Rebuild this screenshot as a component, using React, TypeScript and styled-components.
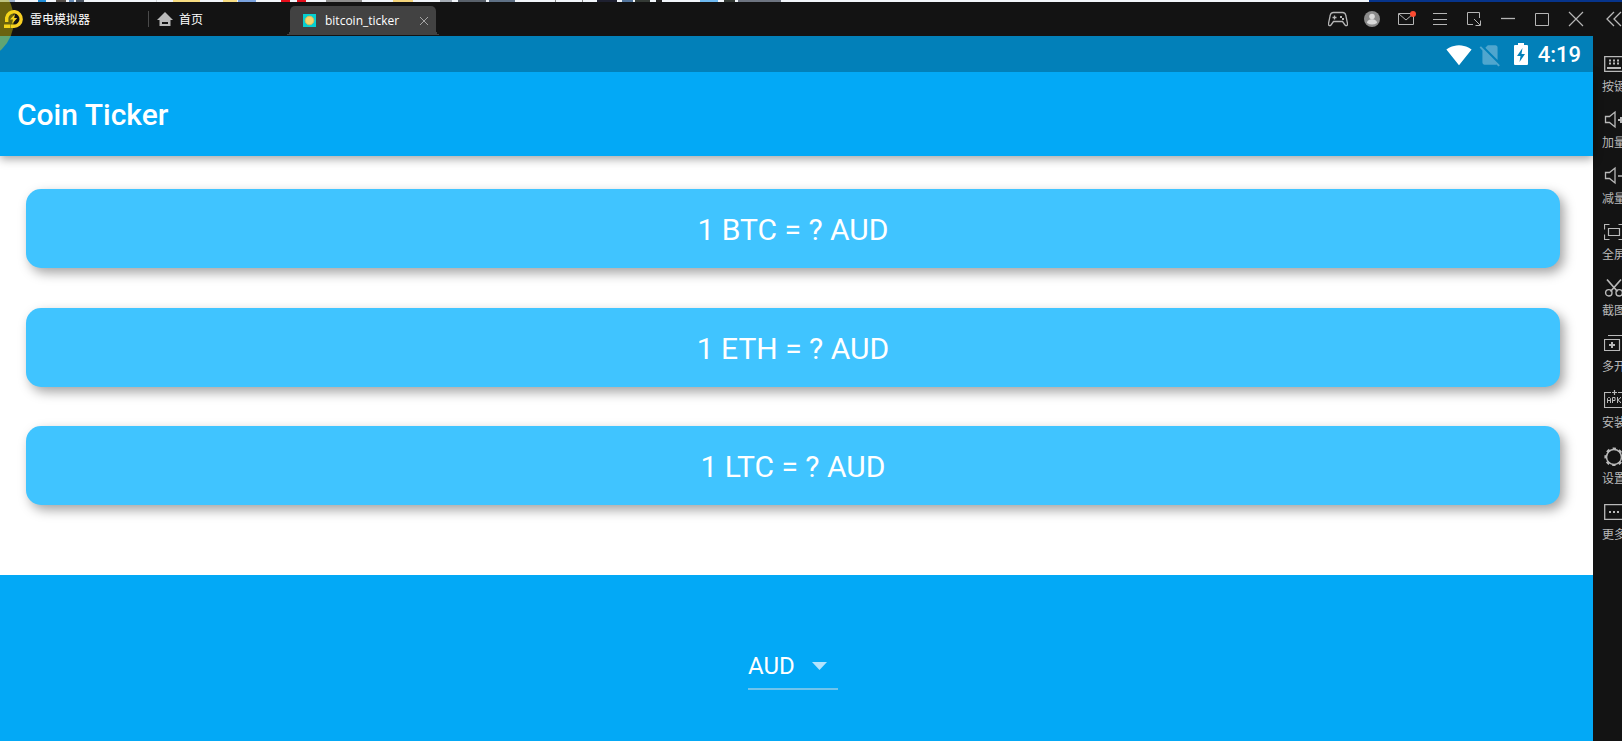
import React from "react";
import styled, { createGlobalStyle } from "styled-components";

const GlobalStyle = createGlobalStyle`
  * { box-sizing: border-box; }
  html, body, #root { height: 100%; }
  body { margin: 0; overflow: hidden; background: #131313; }
  button { font: inherit; color: inherit; background: none; border: 0; padding: 0; cursor: pointer; }
  svg { display: block; }
`;

const uiFont = `"Open Sans", "Noto Sans CJK SC", sans-serif`;
const appFont = `Roboto, sans-serif`;

const Desktop = styled.div`
  display: flex;
  flex-direction: column;
  min-height: 100vh;
  position: relative;
`;

const BackdropStrip = styled.svg`
  width: 100%;
  height: 2px;
  background: linear-gradient(90deg, #f1f5fa 84.4%, #06348c 84.4%);
`;

const Emulator = styled.div`
  display: flex;
  flex: 1;
  background: #131313;
`;

const Main = styled.div`
  flex: 1;
  min-width: 0;
  display: flex;
  flex-direction: column;
`;

const TitleBar = styled.header`
  display: flex;
  align-items: center;
  height: 34px;
  color: #fff;
  font-family: ${uiFont};
  font-size: 12px;
  line-height: 16px;
`;

const Brand = styled.div`
  display: flex;
  align-items: center;
  gap: 6px;
  width: 148px;
`;

const Label = styled.span`
  padding-top: 2px;
`;

const HomeButton = styled.button`
  display: flex;
  align-items: center;
  gap: 6px;
  width: 142px;
  height: 16px;
  padding-left: 8px;
  border-left: 1px solid #4a4a4a;
`;

const Tab = styled.div`
  position: relative;
  align-self: flex-end;
  display: flex;
  align-items: center;
  width: 146px;
  height: 29px;
  margin-bottom: 1px;
  padding: 0 8px 0 13px;
  background: #424242;
  border-radius: 5px 5px 0 0;

  &::before, &::after {
    content: "";
    position: absolute;
    bottom: 0;
    width: 5px;
    height: 5px;
  }
  &::before { right: 100%; background: radial-gradient(circle at 0 0, transparent 5px, #424242 5px); }
  &::after { left: 100%; background: radial-gradient(circle at 100% 0, transparent 5px, #424242 5px); }
`;

const TabName = styled.span`
  flex: 1;
  margin-left: 9px;
  white-space: nowrap;
`;

const WindowTools = styled.div`
  display: flex;
  margin-left: auto;
`;

const ToolButton = styled.button`
  display: grid;
  place-items: center;
  width: 34px;
  height: 34px;
  color: #b5b5b5;
`;

const StatusBar = styled.div`
  position: relative;
  z-index: 1;
  display: flex;
  align-items: center;
  justify-content: flex-end;
  height: 36px;
  padding: 2px 12px 0 0;
  background: #0280b9;
  color: #fff;
  font: 500 22px/34px ${appFont};
`;

const StatusIcons = styled.div`
  display: flex;
  align-items: center;
  gap: 5px;
  margin-right: 4px;
`;

const AppBar = styled.div`
  position: relative;
  display: flex;
  align-items: center;
  height: 84px;
  padding: 2px 17px 0;
  background: #03a9f6;
  color: #fff;
  box-shadow: 0 3px 9px rgba(0, 0, 0, 0.36);
`;

const AppTitle = styled.h1`
  margin: 0;
  font: 500 30px/36px ${appFont};
`;

const RateList = styled.main`
  flex: 1;
  display: flex;
  flex-direction: column;
  justify-content: space-between;
  padding: 33px 33px 70px 26px;
  background: #fff;
`;

const RateCard = styled.div`
  display: grid;
  place-items: center;
  height: 79px;
  padding-top: 3px;
  border-radius: 15px;
  background: #40c4ff;
  color: #fff;
  font: 400 30px/36px ${appFont};
  box-shadow: 4px 5px 12px rgba(0, 0, 0, 0.36);
`;

const CurrencyBar = styled.footer`
  display: flex;
  justify-content: center;
  padding: 67px 7px 51px 0;
  background: #03a9f6;
`;

const SelectWrap = styled.label`
  position: relative;
  width: 90px;
`;

const CurrencySelect = styled.select`
  appearance: none;
  width: 100%;
  height: 48px;
  padding: 2px 0 0;
  border: 0;
  border-bottom: 2px solid #6fc4ec;
  border-radius: 0;
  outline: 0;
  background: transparent;
  color: #fff;
  font: 400 24px/28px ${appFont};

  option { color: #222; }
`;

const SelectArrow = styled.svg`
  position: absolute;
  right: 11px;
  top: 20px;
  pointer-events: none;
`;

const SideBar = styled.nav`
  flex: 0 0 29px;
  overflow: hidden;
  font-family: ${uiFont};
  font-size: 12px;
  line-height: 16px;
  color: #b9b9b9;
`;

const SideTools = styled.div`
  display: flex;
  flex-direction: column;
  align-items: center;
  width: 42px;
`;

const CollapseButton = styled.button`
  display: grid;
  place-items: center;
  height: 34px;
  margin-bottom: 18px;
`;

const SideButton = styled.button`
  display: flex;
  flex-direction: column;
  align-items: center;
  gap: 5px;
  height: 56px;
  white-space: nowrap;
`;

const TouchBlob = styled.div`
  position: absolute;
  z-index: 2;
  left: -68px;
  top: -21px;
  width: 82px;
  height: 82px;
  border-radius: 50%;
  background: rgba(237, 220, 10, 0.4);
  pointer-events: none;
`;

const Line = ({ size, children }: { size: number; children: React.ReactNode }) => (
  <svg width={size} height={size} viewBox={`0 0 ${size} ${size}`} fill="none" stroke="currentColor" aria-hidden="true">
    {children}
  </svg>
);

const windowTools: [string, React.ReactNode][] = [
  ["手柄", <>
    <path d="M5.5 3.5h9c2 0 3 1 3.300 3l1.700 8c.3 2.500-1.500 2.500-2.500 1.500l-2.500-3.500h-9L3 16C2 17 .2 17 .5 14.500l1.700-8c.3-2 1.300-3 3.300-3z" strokeWidth="1.300" />
    <path d="M4.500 8.500h4M6.500 6.500v4" strokeWidth="1.300" />
    <path d="M12 8h2M14 10h2" strokeWidth="2" />
  </>],
  ["账号", <>
    <circle cx="10" cy="10" r="8" fill="#8b8b8b" stroke="none" />
    <circle cx="10" cy="7.500" r="2.800" fill="#d9d9d9" stroke="none" />
    <path d="M5 14c0-5 10-5 10 0q-5 3-10 0z" fill="#d9d9d9" stroke="none" />
  </>],
  ["消息", <>
    <path d="M2.500 4.500h15v11h-15z" />
    <path d="M3 5l7 6 7-6" />
    <circle cx="17" cy="5" r="3" fill="#fb4b31" stroke="none" />
  </>],
  ["菜单", <path d="M3 4.500h14M3 10.500h14M3 15.500h14" />],
  ["小窗", <>
    <path d="M9 15.500H3.500v-12h12V9" />
    <path d="M10 10l6 6M16.500 11.500v5h-5" />
  </>],
  ["最小化", <path d="M3 9.500h14" strokeWidth="1.300" />],
  ["最大化", <path d="M3.500 4.500h13v12h-13z" />],
  ["关闭", <path d="M3 3l14 14M17 3L3 17" strokeWidth="1.200" />],
];

const speaker = <path d="M1.500 6.500h4l5.500-4.500v15l-5.500-4.500h-4z" strokeWidth="1.300" />;

const sideTools: [string, React.ReactNode][] = [
  ["按键", <>
    <path d="M.7 2.700h19v14.600h-19z" strokeWidth="1.300" />
    <path d="M5 6.500h11M5 9.500h11" strokeWidth="2" strokeDasharray="2 2" />
    <path d="M3 14h14" strokeWidth="2" />
  </>],
  ["加量", <>{speaker}<path d="M14 10h6M17 7v6" strokeWidth="2" /></>],
  ["减量", <>{speaker}<path d="M14 10h6" strokeWidth="1.500" /></>],
  ["全屏", <>
    <path d="M5.500 2.500h-5v5M14.500 2.500h5v5M.5 12.500v5h5M19.500 12.500v5h-5" strokeWidth="1.200" />
    <path d="M4.500 6.500h11v7h-11z" strokeWidth="1.200" />
  </>],
  ["截图", <>
    <path d="M3 1.500l10.500 12M17 1.500L6.500 13.500" strokeWidth="1.700" />
    <circle cx="4.800" cy="14.800" r="3.200" strokeWidth="1.400" />
    <circle cx="15.200" cy="14.800" r="3.200" strokeWidth="1.400" />
  </>],
  ["多开", <>
    <path d="M.5 5.500h15v11h-15zM4 1.500h15.500v12" strokeWidth="1.200" />
    <path d="M5 11h6M8 8v6" strokeWidth="2" />
  </>],
  ["安装", <>
    <path d="M7 2.500H.5v15h19v-15H14M8 2.500h5M10.500 0v5" strokeWidth="1.200" />
    <path d="M3.500 13V8.500l1-1h1l1 1V13M3.500 10.500h3M8.500 13V7.500h2.500v3H8.500M13.500 7v6M16.500 7v1l-3 2 3 2v1" />
  </>],
  ["设置", <>
    <circle cx="10" cy="11" r="7.500" strokeWidth="1.500" />
    <circle cx="10" cy="11" r="8.300" strokeWidth="2.600" strokeDasharray="3.260 3.260" strokeDashoffset="1.600" />
  </>],
  ["更多", <>
    <path d="M.7 2.700h19v14.600h-19z" strokeWidth="1.300" />
    <path d="M5 10h10" strokeWidth="2" strokeDasharray="2 2" />
  </>],
];

/* Slivers of the window behind the emulator: x, width, colour. */
const slivers: [number, number, string][] = [
  [0, 15, "#9fb4cf"], [38, 8, "#218ed8"], [56, 10, "#554f4a"], [69, 5, "#6a8fb8"], [76, 8, "#4b5563"],
  [156, 1, "#d5d8dc"], [173, 27, "#f7dd82"], [223, 14, "#f7dd82"], [238, 18, "#7ba3df"],
  [281, 9, "#e60f1c"], [297, 9, "#e60f1c"], [326, 36, "#8d8d8d"], [393, 20, "#f4d57b"],
  [440, 12, "#a5acb5"], [458, 28, "#59616b"], [489, 26, "#5f7186"], [555, 1, "#888"], [582, 1, "#888"],
  [597, 20, "#1e2030"], [622, 11, "#52749b"], [635, 15, "#343a35"], [656, 6, "#222"],
  [700, 18, "#6eb9f0"], [724, 11, "#343a35"], [738, 43, "#6d7480"],
];

const coins = ["BTC", "ETH", "LTC"];
const currencies = ["AUD", "BRL", "CAD", "CNY", "EUR", "GBP", "HKD", "JPY", "USD"];

export default function App() {
  const [currency, setCurrency] = React.useState("AUD");

  return (
    <Desktop>
      <GlobalStyle />
      <BackdropStrip aria-hidden="true">
        {slivers.map(([x, w, fill]) => <rect key={x} x={x} width={w} height="2" fill={fill} />)}
      </BackdropStrip>
      <Emulator>
        <Main>
          <TitleBar>
            <Brand>
              <svg width="24" height="20" viewBox="0 0 24 20" aria-hidden="true">
                <path d="M6.700 13V8.700A7.300 7.300 0 1 1 14 17.300H10.500" fill="none" stroke="#f8cf22" strokeWidth="3.400" />
                <path d="M15 5l-5 5.500h3L12 15l5.200-6h-3z" fill="#f8cf22" />
                <path d="M4 15.500h6V19H4z" fill="#f8cf22" />
              </svg>
              <Label>雷电模拟器</Label>
            </Brand>
            <HomeButton>
              <svg width="16" height="14" viewBox="0 0 16 14" aria-hidden="true">
                <path d="M8 0l8 8h-2.500v6h-11V8H0z" fill="#b9b9b9" />
                <path d="M5 10h6v2H5z" fill="#131313" />
              </svg>
              <Label>首页</Label>
            </HomeButton>
            <Tab>
              <svg width="13" height="13" viewBox="0 0 13 13" aria-hidden="true">
                <path d="M0 0h13v13H0z" fill="#06cfd0" />
                <circle cx="6.500" cy="6.500" r="4.300" fill="#f3d56b" stroke="#d9b95a" />
              </svg>
              <TabName>bitcoin_ticker</TabName>
              <button aria-label="关闭标签">
                <svg width="8" height="8" viewBox="0 0 8 8" stroke="#a5a5a5" aria-hidden="true">
                  <path d="M0 0l8 8M8 0L0 8" />
                </svg>
              </button>
            </Tab>
            <WindowTools>
              {windowTools.map(([name, icon]) => (
                <ToolButton key={name} aria-label={name}><Line size={20}>{icon}</Line></ToolButton>
              ))}
            </WindowTools>
          </TitleBar>

          <StatusBar>
            <StatusIcons>
              <svg width="26" height="26" viewBox="0 0 24 24" fill="#fff" aria-hidden="true">
                <path d="M12.010 21.490L23.640 7c-.45-.34-4.930-4-11.640-4C5.280 3 .81 6.660.36 7l11.630 14.490.01.01.01-.01z" />
              </svg>
              <svg width="26" height="26" viewBox="0 0 24 24" fill="#fff" opacity="0.3" aria-hidden="true">
                <path d="M18.990 5c0-1.100-.89-2-1.990-2h-7L7.660 5.340 19 16.680 18.990 5zM3.650 3.880L2.380 5.150 5 7.770V19c0 1.100.9 2 2 2h10.010c.35 0 .67-.1.96-.26l1.880 1.880 1.270-1.270L3.650 3.880z" />
              </svg>
              <svg width="26" height="26" viewBox="0 0 26 26" fill="#fff" fillRule="evenodd" aria-hidden="true">
                <path d="M10 1h6v2h3q1 0 1 1v18q0 1-1 1H7q-1 0-1-1V4q0-1 1-1h3zM14.500 6L9 14h3.500l-1 6L17 12h-3.500z" />
              </svg>
            </StatusIcons>
            <span>4:19</span>
          </StatusBar>

          <AppBar><AppTitle>Coin Ticker</AppTitle></AppBar>

          <RateList>
            {coins.map((coin) => <RateCard key={coin}>{`1 ${coin} = ? ${currency}`}</RateCard>)}
          </RateList>

          <CurrencyBar>
            <SelectWrap>
              <CurrencySelect aria-label="Currency" value={currency} onChange={(e) => setCurrency(e.target.value)}>
                {currencies.map((c) => <option key={c}>{c}</option>)}
              </CurrencySelect>
              <SelectArrow width="15" height="8" viewBox="0 0 15 8" aria-hidden="true">
                <path d="M0 0h15L7.500 8z" fill="#b4e4fd" />
              </SelectArrow>
            </SelectWrap>
          </CurrencyBar>
        </Main>

        <SideBar>
          <SideTools>
            <CollapseButton aria-label="收起">
              <Line size={16}><path d="M8 1L1 8l7 7M15 1L8 8l7 7" strokeWidth="1.300" /></Line>
            </CollapseButton>
            {sideTools.map(([name, icon]) => (
              <SideButton key={name}><Line size={20}>{icon}</Line><span>{name}</span></SideButton>
            ))}
          </SideTools>
        </SideBar>
      </Emulator>
      <TouchBlob />
    </Desktop>
  );
}
